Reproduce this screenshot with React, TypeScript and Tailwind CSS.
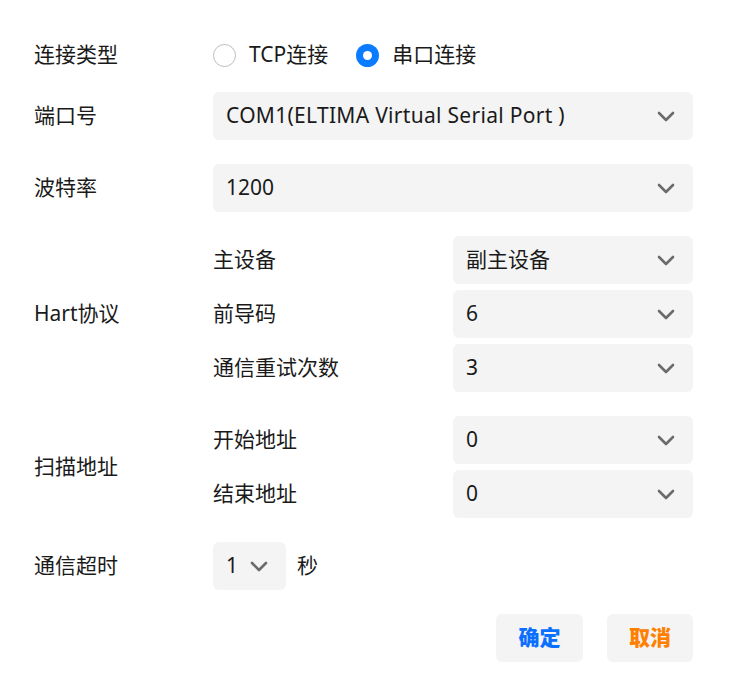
import React from "react";

const Chevron = ({ className = "" }: { className?: string }) => (
  <svg width="18" height="11" viewBox="0 0 18 11" className={className}>
    <path d="M2 2 L9 9 L16 2" fill="none" stroke="#6b6b6b" strokeWidth="2.6" strokeLinecap="round" strokeLinejoin="round" />
  </svg>
);

const Select = ({ value, className = "" }: { value: string; className?: string }) => (
  <div className={`flex h-12 items-center justify-between rounded-md bg-[#f4f4f4] pl-[13px] pr-[18px] ${className}`}>
    <span>{value}</span>
    <Chevron />
  </div>
);

const Radio = ({ checked, label }: { checked: boolean; label: string }) => (
  <div className="flex items-center gap-[13px]">
    {checked ? (
      <span className="flex h-[23px] w-[23px] items-center justify-center rounded-full bg-[#0b7bff]">
        <span className="h-[9px] w-[9px] rounded-full bg-white" />
      </span>
    ) : (
      <span className="h-[23px] w-[23px] rounded-full border-[1.5px] border-[#bdbdbd] bg-white" />
    )}
    <span>{label}</span>
  </div>
);

export default function App() {
  return (
    <div
      className="w-[736px] h-[685px] bg-white pl-[34px] pr-[43px] pt-[31px] text-[21px] text-[#1a1a1a]"
      style={{ fontFamily: '"Noto Sans", "Noto Sans CJK SC", sans-serif' }}
    >
      <div className="flex h-12 items-center">
        <div className="w-[179px]">连接类型</div>
        <div className="flex items-center gap-[28px]">
          <Radio checked={false} label="TCP连接" />
          <Radio checked={true} label="串口连接" />
        </div>
      </div>

      <div className="mt-[13px] flex h-12 items-center">
        <div className="w-[179px]">端口号</div>
        <Select value="COM1(ELTIMA Virtual Serial Port )" className="flex-1 tracking-[0.3px]" />
      </div>

      <div className="mt-6 flex h-12 items-center">
        <div className="w-[179px]">波特率</div>
        <Select value="1200" className="flex-1" />
      </div>

      <div className="mt-6 flex items-center">
        <div className="w-[179px]">Hart协议</div>
        <div className="flex flex-1 flex-col gap-[6px]">
          {[
            ["主设备", "副主设备"],
            ["前导码", "6"],
            ["通信重试次数", "3"],
          ].map(([l, v]) => (
            <div key={l} className="flex items-center">
              <div className="w-[240px]">{l}</div>
              <Select value={v} className="flex-1" />
            </div>
          ))}
        </div>
      </div>

      <div className="mt-6 flex items-center">
        <div className="w-[179px]">扫描地址</div>
        <div className="flex flex-1 flex-col gap-[6px]">
          {[
            ["开始地址", "0"],
            ["结束地址", "0"],
          ].map(([l, v]) => (
            <div key={l} className="flex items-center">
              <div className="w-[240px]">{l}</div>
              <Select value={v} className="flex-1" />
            </div>
          ))}
        </div>
      </div>

      <div className="mt-6 flex h-12 items-center">
        <div className="w-[179px]">通信超时</div>
        <div className="flex h-12 w-[73px] items-center gap-[12px] rounded-md bg-[#f4f4f4] pl-[13px]">
          <span>1</span>
          <Chevron />
        </div>
        <span className="ml-[11px]">秒</span>
      </div>

      <div className="mt-6 flex justify-end gap-6">
        <button className="flex h-12 w-[87px] items-center justify-center rounded-md bg-[#f4f4f4] font-black text-[#0b6fff]">
          确定
        </button>
        <button className="flex h-12 w-[86px] items-center justify-center rounded-md bg-[#f4f4f4] font-black text-[#ff8000]">
          取消
        </button>
      </div>
    </div>
  );
}
